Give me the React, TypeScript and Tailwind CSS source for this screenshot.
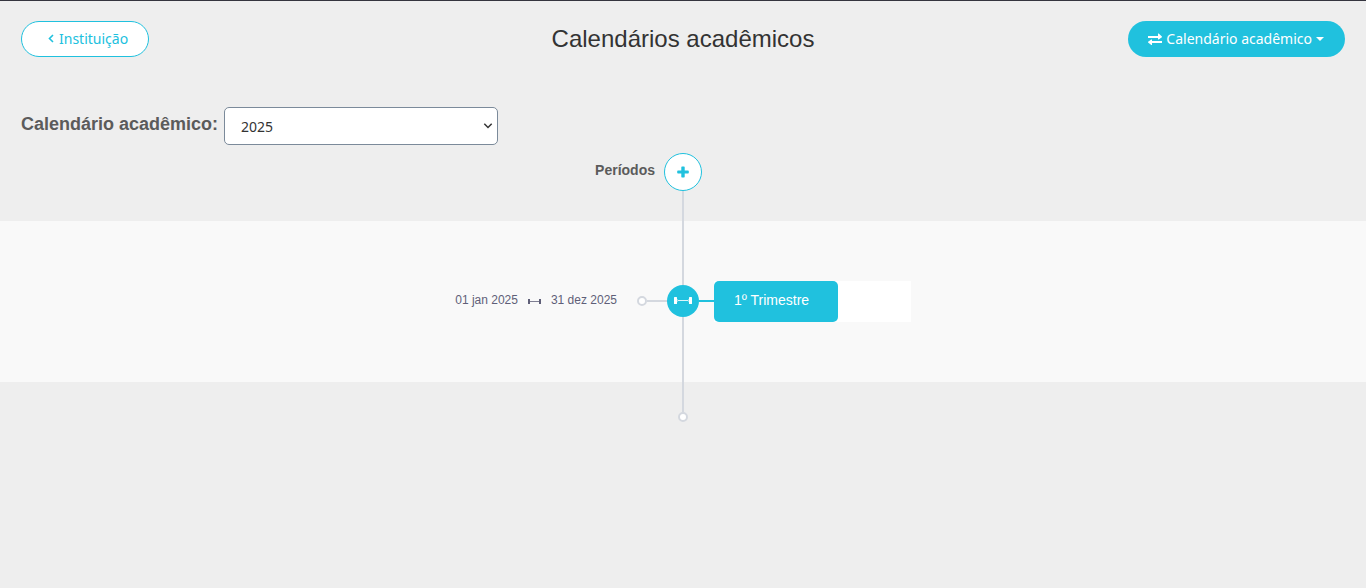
import React, { useState } from "react";

function AngleLeftIcon() {
  return (
    <svg viewBox="0 0 6 9" fill="none" stroke="currentColor" strokeWidth="1.6" aria-hidden="true" className="mb-px h-[9px] w-1.5">
      <path d="M5 1L1.5 4.5L5 8" />
    </svg>
  );
}

function ExchangeIcon() {
  return (
    <svg viewBox="0 0 14 12" fill="currentColor" aria-hidden="true" className="h-3 w-3.5">
      <path d="M0 3h10V0.8q0.2-0.5 0.7-0.2L13.9 3.5q0.2 0.5 0 0.7L10.7 6.5q-0.5 0.2-0.7-0.3V5H0z" />
      <path d="M14 8H4V6.8q-0.2-0.5-0.7-0.3L0.1 8.8q-0.2 0.3 0 0.7L3.3 12q0.5 0.1 0.7-0.3V10H14z" />
    </svg>
  );
}

function PlusIcon() {
  return (
    <svg viewBox="0 0 12 12" fill="currentColor" aria-hidden="true" className="size-3">
      <path d="M5 0.5h2q0.7 0 0.7 0.7v3.3h3.3q0.8 0 0.8 0.7v1.6q0 0.7-0.8 0.7h-3.3v3.3q0 0.7-0.7 0.7h-2q-0.7 0-0.7-0.7v-3.3h-3.3q-0.8 0-0.8-0.7v-1.6q0-0.7 0.8-0.7h3.3v-3.3q0-0.7 0.7-0.7z" />
    </svg>
  );
}

function CaretDownIcon() {
  return (
    <svg viewBox="0 0 8 4" fill="currentColor" aria-hidden="true" className="h-1 w-2">
      <path d="M0 0h8L4 4z" />
    </svg>
  );
}

function ChevronDownIcon() {
  return (
    <svg viewBox="0 0 10 6" fill="none" stroke="currentColor" strokeWidth="1.5" aria-hidden="true" className="h-1.5 w-2.5">
      <path d="M1.3 0.8L5 4.5l3.7-3.7" />
    </svg>
  );
}

function RangeIcon() {
  return (
    <svg viewBox="0 0 18 7" fill="currentColor" aria-hidden="true" className="h-[7px] w-[18px]">
      <rect x="0" y="0" width="3" height="7" rx="0.5" />
      <rect x="4" y="3" width="10" height="1" opacity="0.85" />
      <rect x="15" y="0" width="3" height="7" rx="0.5" />
      <rect x="3" y="2" width="1" height="3" opacity="0.4" />
      <rect x="14" y="2" width="1" height="3" opacity="0.4" />
    </svg>
  );
}

function SmallRangeIcon() {
  return (
    <svg viewBox="0 0 13 5" fill="currentColor" aria-hidden="true" className="mt-0.5 h-[5px] w-[13px]">
      <rect x="0" y="0" width="2" height="5" />
      <rect x="2" y="2" width="9" height="1" opacity="0.8" />
      <rect x="11" y="0" width="2" height="5" />
    </svg>
  );
}

function Dot() {
  return <span className="size-2.5 shrink-0 rounded-full border-2 border-[#d4d8df] bg-white" />;
}

function VerticalLine({ className }: { className: string }) {
  return <span className={`w-0.5 bg-[#d4d8df] ${className}`} />;
}

interface Period {
  name: string;
  start: string;
  end: string;
}

const periods: Period[] = [{ name: "1º Trimestre", start: "01 jan 2025", end: "31 dez 2025" }];

function PeriodRow({ period }: { period: Period }) {
  return (
    <li className="grid grid-cols-[1fr_auto_1fr] items-center bg-[#f9f9f9]">
      <div className="flex items-center justify-end pb-px">
        <p className="flex items-center gap-2.5 pb-0.5 text-xs text-[#5f5f78]">
          <time>{period.start}</time>
          <SmallRangeIcon />
          <time>{period.end}</time>
        </p>
        <span className="ml-5 flex items-center">
          <Dot />
          <span className="h-0.5 w-5 bg-[#d4d8df]" />
        </span>
      </div>
      <div className="flex flex-col items-center">
        <VerticalLine className="h-16" />
        <span className="flex size-8 items-center justify-center rounded-full bg-[#20c1de] pb-px text-white">
          <RangeIcon />
        </span>
        <VerticalLine className="h-[65px]" />
      </div>
      <div className="flex items-center">
        <span className="mb-px h-0.5 w-[15px] bg-[#20c1de]" />
        <div className="flex w-[197px] bg-white">
          <button type="button" className="w-[124px] rounded-[5px] bg-[#20c1de] px-5 pt-2.5 pb-3 text-left text-sm leading-[19px] text-white">
            {period.name}
          </button>
        </div>
      </div>
    </li>
  );
}

export default function App() {
  const [year, setYear] = useState("2025");

  return (
    <div className="min-h-screen border-t border-[#34343e] bg-[#eeeeee] font-['Liberation_Sans',sans-serif]">
      <header className="grid grid-cols-[1fr_auto_1fr] items-center px-[21px] pt-5">
        <a
          href="#instituicao"
          className="flex h-9 items-center gap-[5px] justify-self-start rounded-full border border-[#20c1de] bg-white pr-5 pl-[26px] font-['Noto_Sans',sans-serif] text-sm text-[#20c1de]"
        >
          <AngleLeftIcon />
          Instituição
        </a>
        <h1 className="text-2xl text-[#333333]">Calendários acadêmicos</h1>
        <button
          type="button"
          className="flex h-9 items-center gap-1 justify-self-end rounded-full bg-[#20c1de] pr-[21px] pl-5 font-['Noto_Sans',sans-serif] text-sm text-white"
        >
          <ExchangeIcon />
          Calendário acadêmico
          <CaretDownIcon />
        </button>
      </header>

      <main className="pt-[50px]">
        <div className="flex items-start gap-1.5 px-[21px]">
          <label htmlFor="year" className="pt-[3px] text-lg font-bold text-[#5b5b5b]">
            Calendário acadêmico:
          </label>
          <div className="relative">
            <select
              id="year"
              value={year}
              onChange={(event) => setYear(event.target.value)}
              className="block h-[38px] w-[274px] appearance-none rounded-[5px] border border-[#7b8a9a] bg-white px-4 pt-0.5 font-['Noto_Sans',sans-serif] text-sm text-[#333333]"
            >
              <option value="2025">2025</option>
            </select>
            <span className="pointer-events-none absolute inset-y-0 right-[5px] flex items-center text-[#333333]">
              <ChevronDownIcon />
            </span>
          </div>
        </div>

        <section className="pt-2">
          <div className="grid grid-cols-[1fr_auto_1fr]">
            <h2 className="pt-[7px] pr-[9px] text-right text-sm font-bold text-[#5b5b5b]">Períodos</h2>
            <div className="flex flex-col items-center">
              <button
                type="button"
                aria-label="Adicionar período"
                className="flex size-[38px] items-center justify-center rounded-full border border-[#20c1de] bg-white text-[#20c1de]"
              >
                <PlusIcon />
              </button>
              <VerticalLine className="h-[30px]" />
            </div>
          </div>
          <ul>
            {periods.map((period) => (
              <PeriodRow key={period.name} period={period} />
            ))}
          </ul>
          <div className="flex flex-col items-center">
            <VerticalLine className="h-[30px]" />
            <Dot />
          </div>
        </section>
      </main>
    </div>
  );
}
